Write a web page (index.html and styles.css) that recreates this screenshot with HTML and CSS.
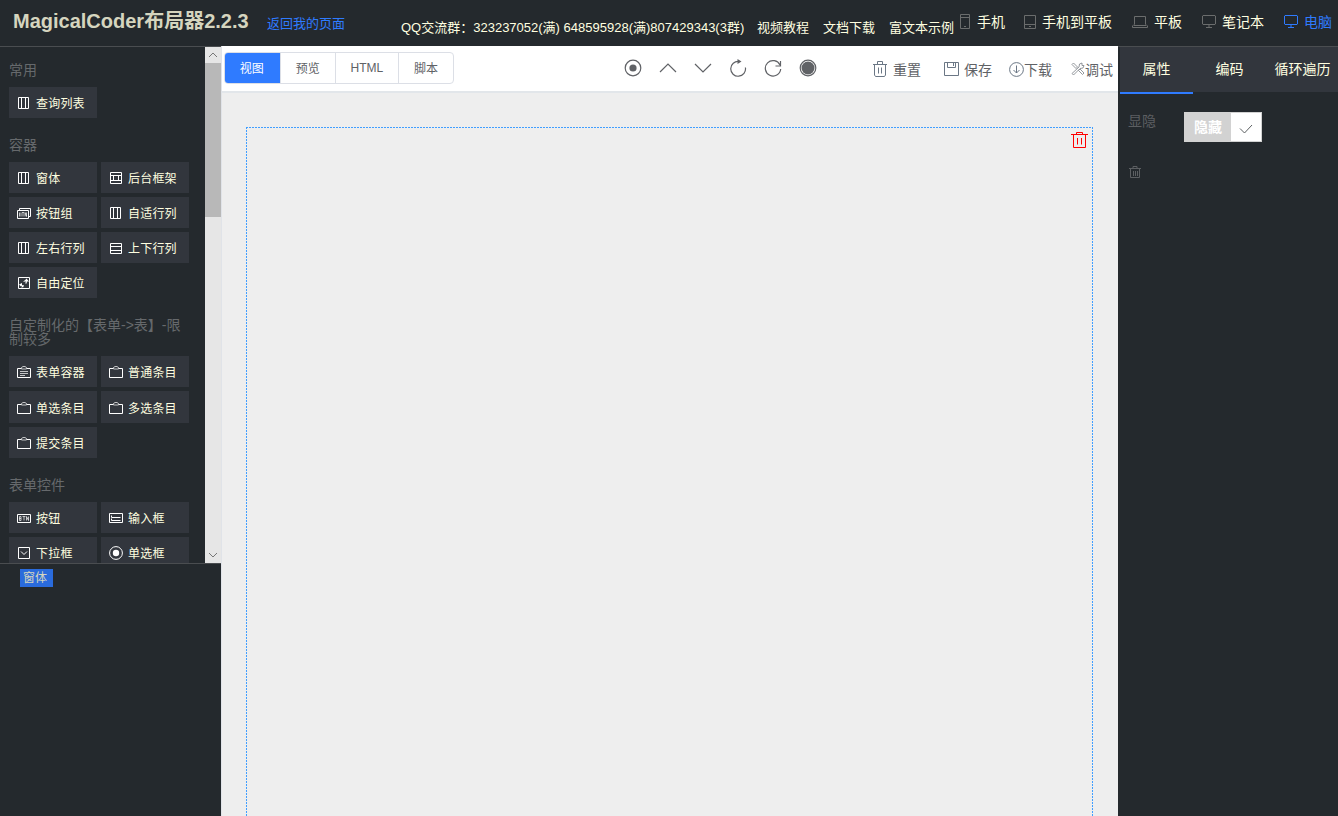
FILE: index.html
```html
<!DOCTYPE html>
<html lang="zh">
<head>
  <meta charset="UTF-8">
  <title>MagicalCoder布局器2.2.3</title>
  <link rel="stylesheet" href="styles.css">
</head>
<body>

  <!-- shared icons -->
  <svg class="sprite">
    <symbol id="i-cols" viewBox="0 0 14 14"><path d="M1.5 1.5h10v11h-10zM4.5 1.5v11M8.5 1.5v11"/></symbol>
    <symbol id="i-rows" viewBox="0 0 14 14"><path d="M1.5 2.5h11v10h-11zM1.5 5.5h11M1.5 9.5h11"/></symbol>
    <symbol id="i-frame" viewBox="0 0 14 14"><path d="M1.5 1.5h11v11h-11zM1.5 4.5h11M1.5 9.5h11M4.5 4.5v5M9.5 4.5v5"/></symbol>
    <symbol id="i-btn" viewBox="0 0 14 14"><path d="M.5 3.5h13v8h-13z"/><path class="thin" d="M2.5 5.5v4h1.5v-4zM2.5 7.5h1.5M5.5 5.5h3M7 5.5v4M9.5 9.5v-4l2 4v-4"/></symbol>
    <symbol id="i-btns" viewBox="0 0 14 14"><path d="M.5 4.5h11v8H.5zM2.5 4.5v-2h11v8h-2"/><path class="thin" d="M2.5 6.5v4M4 6.5v4M5 6.5h2M6 6.5v4M8 10.5v-4l1.5 4v-4"/></symbol>
    <symbol id="i-free" viewBox="0 0 14 14"><path d="M1.5 1.5h11v11h-11z"/><path class="soft" d="M6.500 5.500l3-1.500M8.500 7.500l1-3"/><path class="fill" d="M7 5.500l2.500-3L12 5.500zM2 8.500l3 3V7zM5 9l2 2-3 .5z"/><path class="soft" d="M9.500 5v2.500M4 9.500h3"/></symbol>
    <symbol id="i-clip" viewBox="0 0 14 14"><path d="M4 3.500H.5v9h13v-9H10"/><path class="soft" d="M4.500 4V2.500L6 1.500h2l1.500 1V4z"/></symbol>
    <symbol id="i-form" viewBox="0 0 14 14"><path d="M4 3.500H.5v9h13v-9H10"/><path class="soft" d="M4.500 4V2.500L6 1.500h2l1.500 1V4zM3 6.500h8M3 8.500h8M3 10.500h5"/></symbol>
    <symbol id="i-input" viewBox="0 0 14 14"><path d="M.5 2.500h13v9H.5zM2.500 4.500v2h9M2.500 7.500v2h9"/></symbol>
    <symbol id="i-select" viewBox="0 0 14 14"><path d="M1.5 1.5h11v11h-11zM4 5.500l3 3 3-3"/></symbol>
    <symbol id="i-radio" viewBox="0 0 14 14"><circle cx="7" cy="7" r="6.4"/><circle class="fill" cx="7" cy="7" r="3.2"/></symbol>
    <symbol id="i-trash" viewBox="0 0 17 18"><path d="M0 3.500h17M5.500 3V1.500h6V3M2.500 3.500v13h12v-13M6.500 7v6.500M10.500 7v6.500"/></symbol>
    <symbol id="i-check" viewBox="0 0 14 12"><path d="M1 5.500l4.500 4.500L13 2"/></symbol>
  </svg>

  <header class="header">
    <h1 class="title">MagicalCoder布局器2.2.3</h1>
    <a class="back" href="#">返回我的页面</a>
    <div class="links">
      <span class="qq">QQ交流群：323237052(满) 648595928(满)807429343(3群)</span>
      <a href="#">视频教程</a>
      <a href="#">文档下载</a>
      <a href="#">富文本示例</a>
    </div>
    <nav class="devices">
      <a href="#" class="phone"><svg width="10" height="15"><path d="M.5 .5h9v14h-9zM.5 3.5h9M4 12.5h2"/></svg>手机</a>
      <a href="#" class="phone-pad"><svg width="12" height="14"><path d="M.5 .5h11v13H.5zM.5 9.5h11M5 11.5h2"/></svg>手机到平板</a>
      <a href="#" class="pad"><svg width="16" height="12"><path d="M2.500 8.500V.5h11v8M2 8.500L.5 10v1.500h15V10L14 8.500M2 9.500h12"/></svg>平板</a>
      <a href="#" class="laptop"><svg width="14" height="13"><path d="M1 .5h12l.5.500v8l-.5.500H1L.5 9V1zM7 9.500V12M4 12.500h6"/></svg>笔记本</a>
      <a href="#" class="pc active"><svg width="14" height="13"><path d="M1 .5h12l.5.500v8l-.5.500H1L.5 9V1zM7 9.500V12M4 12.500h6"/></svg>电脑</a>
    </nav>
  </header>

  <div class="main">
    <aside class="left">
      <div class="palette">
        <div class="groups">
          <section>
            <h2>常用</h2>
            <ul>
              <li><svg><use href="#i-cols"/></svg>查询列表</li>
            </ul>
          </section>
          <section>
            <h2>容器</h2>
            <ul>
              <li><svg><use href="#i-cols"/></svg>窗体</li>
              <li><svg><use href="#i-frame"/></svg>后台框架</li>
              <li><svg><use href="#i-btns"/></svg>按钮组</li>
              <li><svg><use href="#i-cols"/></svg>自适行列</li>
              <li><svg><use href="#i-cols"/></svg>左右行列</li>
              <li><svg><use href="#i-rows"/></svg>上下行列</li>
              <li><svg><use href="#i-free"/></svg>自由定位</li>
            </ul>
          </section>
          <section>
            <h2>自定制化的【表单-&gt;表】-限制较多</h2>
            <ul>
              <li><svg><use href="#i-form"/></svg>表单容器</li>
              <li><svg><use href="#i-clip"/></svg>普通条目</li>
              <li><svg><use href="#i-clip"/></svg>单选条目</li>
              <li><svg><use href="#i-clip"/></svg>多选条目</li>
              <li><svg><use href="#i-clip"/></svg>提交条目</li>
            </ul>
          </section>
          <section>
            <h2>表单控件</h2>
            <ul>
              <li><svg><use href="#i-btn"/></svg>按钮</li>
              <li><svg><use href="#i-input"/></svg>输入框</li>
              <li><svg><use href="#i-select"/></svg>下拉框</li>
              <li><svg><use href="#i-radio"/></svg>单选框</li>
            </ul>
          </section>
        </div>
        <div class="scrollbar">
          <svg width="16" height="16"><path d="M4 10l4-4 4 4"/></svg>
          <div class="thumb"></div>
          <svg width="16" height="16"><path d="M4 6l4 4 4-4"/></svg>
        </div>
      </div>
      <div class="tree"><span>窗体</span></div>
    </aside>

    <main class="center">
      <div class="toolbar">
        <div class="tabs">
          <button class="active">视图</button>
          <button>预览</button>
          <button>HTML</button>
          <button>脚本</button>
        </div>
        <div class="tools">
          <svg viewBox="0 0 18 18"><circle cx="9" cy="9" r="7.8"/><circle class="fill" cx="9" cy="9" r="3.6"/></svg>
          <svg viewBox="0 0 18 18"><path d="M1 13l8-8 8 8"/></svg>
          <svg viewBox="0 0 18 18"><path d="M1 5l8 8 8-8"/></svg>
          <svg viewBox="0 0 18 18"><path d="M10 2.500A7.400 7.400 0 1 0 16.400 8.500"/><path class="fill" d="M8.500 0l4 2.500-4 2.500z"/></svg>
          <svg viewBox="0 0 18 18"><path d="M16 6A7.700 7.700 0 1 0 16.700 10M16.500 2v5h-5"/></svg>
          <svg viewBox="0 0 18 18"><circle cx="9" cy="9" r="7.800"/><circle class="fill" cx="9" cy="9" r="6.500"/></svg>
        </div>
        <div class="actions">
          <a href="#" class="reset"><svg width="14" height="16"><path d="M0 3.500h14M4.500 3V.5h5V3M1.500 4v10l1 1.500h9l1-1.500V4M5.500 6.500v6M8.500 6.500v6"/></svg>重置</a>
          <a href="#" class="save"><svg width="15" height="14"><path d="M.5 .5h14v13H.5zM3.500 .5v5h8v-5M9.500 1v3"/></svg>保存</a>
          <a href="#" class="download"><svg width="15" height="15"><circle cx="7.5" cy="7.5" r="6.9"/><path d="M7.500 3.500v7.500M4.500 8l3 3 3-3"/></svg>下载</a>
          <a href="#" class="debug"><svg width="14" height="14"><path d="M1 2.500L2.500 1l4 4L5 6.500zM7.500 8.500L9 7l4 4-1.500 1.500zM1 11.500L8 5l.5-3L11 1v2.500h2L12 6 9 6.500 2.500 13z"/></svg>调试</a>
        </div>
      </div>
      <div class="stage">
        <div class="canvas">
          <svg class="remove" width="17" height="18"><use href="#i-trash"/></svg>
        </div>
      </div>
    </main>

    <aside class="right">
      <div class="prop-tabs">
        <a href="#" class="active">属性</a>
        <a href="#">编码</a>
        <a href="#">循环遍历</a>
      </div>
      <div class="props">
        <div class="prop">
          <label>显隐</label>
          <div class="switch"><b>隐藏</b><i><svg width="14" height="12"><use href="#i-check"/></svg></i></div>
        </div>
        <svg class="clear" width="12" height="12"><path d="M0 2.500h12M4 2V.5h4V2M1.500 3v8.500h9V3M4.500 5v5M6.500 5v5M8.500 5v5"/></svg>
      </div>
    </aside>
  </div>

</body>
</html>
```

FILE: styles.css
```css
* {
  box-sizing: border-box;
}

body {
  margin: 0;
  height: 100vh;
  overflow: hidden;
  display: flex;
  flex-direction: column;
  background: #24292d;
  color: #ffffe0;
  font: 14px "Liberation Sans", "Noto Sans CJK SC", sans-serif;
}

a {
  color: inherit;
  text-decoration: none;
}

svg {
  flex: none;
  fill: none;
  stroke: currentColor;
}

.sprite {
  display: none;
}

.fill {
  fill: currentColor;
  stroke: none;
}

.thin {
  stroke-width: 0.7;
}

.soft {
  opacity: 0.7;
}

/* header */
.header {
  flex: none;
  display: flex;
  height: 46px;
  padding-left: 13px;
  white-space: nowrap;
}

.title {
  width: 254px;
  margin: 0;
  color: #d5d5bf;
  font-size: 20px;
  line-height: 42px;
}

.back {
  width: 134px;
  color: #2f7bff;
  font-size: 13px;
  line-height: 48px;
}

.links {
  display: flex;
  gap: 14px;
  width: 559px;
  font-size: 13px;
  line-height: 56px;
}

.qq {
  width: 342px;
}

.devices {
  display: flex;
  height: 42px;
}

.devices a {
  display: flex;
  align-items: center;
  height: 41px;
}

.devices svg {
  margin-top: 2px;
  color: #6b6d6d;
}

.devices .active,
.devices .active svg {
  color: #2f7bff;
}

.phone {
  gap: 7px;
  width: 64px;
}

.phone-pad {
  gap: 6px;
  width: 108px;
}

.pad {
  gap: 6px;
  width: 70px;
}

.laptop {
  gap: 6px;
  width: 82px;
}

.pc {
  gap: 6px;
}

.main {
  flex: 1;
  display: flex;
  min-height: 0;
}

/* left palette */
.left {
  display: flex;
  flex-direction: column;
  width: 221px;
  border-top: 1px solid #4a4d50;
}

.palette {
  flex: none;
  display: flex;
  height: 516px;
  overflow: hidden;
}

.groups {
  width: 205px;
  padding: 15.9px 12px 0 9px;
}

.groups section {
  margin-bottom: 16px;
}

.groups h2 {
  width: 180px;
  margin: 0 0 10px;
  color: #66696c;
  font-size: 14px;
  font-weight: normal;
  line-height: 14px;
}

.groups ul {
  display: flex;
  flex-wrap: wrap;
  column-gap: 4px;
  margin: 0;
  padding: 0;
  list-style: none;
}

.groups li {
  display: flex;
  align-items: center;
  gap: 5px;
  width: 88px;
  height: 31.1px;
  margin-bottom: 4px;
  padding-left: 8px;
  background: #32363d;
  font-size: 12px;
  letter-spacing: 0.2px;
}

.groups li svg {
  width: 14px;
  height: 14px;
  margin-top: 1px;
  color: #fff;
}

.scrollbar {
  display: flex;
  flex-direction: column;
  width: 16px;
  background: #e6e6e6;
  color: #777;
}

.thumb {
  height: 154px;
  margin-bottom: auto;
  background: #b8b8b8;
}

.tree {
  flex: 1;
  padding: 5px 20px;
  border-top: 1px solid #4a4d50;
}

.tree span {
  display: block;
  width: 33px;
  height: 18px;
  padding-left: 3px;
  background: #2a6bdc;
  color: #d5d5bf;
  font-size: 12px;
  line-height: 18px;
}

/* center */
.center {
  flex: none;
  display: flex;
  flex-direction: column;
  width: 897px;
  border-left: 1px solid #e0e3e8;
  background: #eee;
  color: #606266;
}

.toolbar {
  flex: none;
  display: flex;
  height: 47px;
  padding-left: 2px;
  border-bottom: 2px solid #e2e6ea;
  background: #fff;
}

.tabs {
  display: flex;
  width: 230px;
  height: 32px;
  margin-top: 6px;
  border: 1px solid #dcdfe6;
  border-radius: 4px;
  overflow: hidden;
}

.tabs button {
  flex: 1 1 55px;
  padding: 0 0 1px;
  border: 0;
  border-left: 1px solid #dcdfe6;
  background: none;
  color: inherit;
  font: 12px "Liberation Sans", "Noto Sans CJK SC", sans-serif;
}

.tabs button:nth-child(3) {
  flex-basis: 64px;
}

.tabs .active {
  flex-basis: 56px;
  margin: -1px 0 -1px -1px;
  border: 0;
  background: #2f7bff;
  color: #fff;
}

.tools {
  display: flex;
  align-items: center;
  gap: 17px;
  width: 249px;
  margin-left: 170px;
  padding-bottom: 1px;
}

.tools svg {
  width: 18px;
  height: 18px;
  stroke-width: 1.2;
}

.actions {
  display: flex;
  white-space: nowrap;
}

.actions a {
  display: flex;
  align-items: center;
}

.actions svg {
  margin-top: 1px;
  color: #6b7785;
}

.reset {
  gap: 6px;
  width: 71px;
}

.save {
  gap: 5px;
  width: 65px;
}

.download {
  width: 62px;
}

.debug svg {
  color: #7a7f85;
  stroke-width: 0.8;
}

.stage {
  flex: 1;
  padding: 34px 24px 0;
}

/* fine dashed frame, open at the bottom */
.canvas {
  display: flex;
  justify-content: flex-end;
  width: 847px;
  height: 100%;
  padding: 4px 5px;
  background:
    repeating-linear-gradient(90deg, #409eff 0 2px, transparent 2px 3px) top / 100% 1px no-repeat,
    repeating-linear-gradient(#409eff 0 2px, transparent 2px 3px) left / 1px 100% no-repeat,
    repeating-linear-gradient(#409eff 0 2px, transparent 2px 3px) right / 1px 100% no-repeat;
}

.remove {
  color: #f00;
}

/* right panel */
.right {
  flex: 1;
  padding-left: 2px;
  border-top: 1px solid #4a4d50;
}

.prop-tabs {
  display: flex;
  height: 45px;
  background: #32363d;
}

.prop-tabs a {
  flex: none;
  width: 73px;
  height: 47px;
  line-height: 45px;
  text-align: center;
}

.prop-tabs .active {
  border-bottom: 2px solid #2f7bff;
}

.props {
  padding: 20px 8px;
  color: #5c5f62;
}

.prop {
  display: flex;
  height: 54px;
}

.prop label {
  width: 56px;
  line-height: 18px;
}

.switch {
  display: flex;
  width: 78px;
  height: 30px;
  border: 1px solid #d2d2d2;
  background: #d2d2d2;
}

.switch b {
  width: 46px;
  color: #fff;
  line-height: 28px;
  text-align: center;
}

.switch i {
  flex: 1;
  display: flex;
  align-items: center;
  justify-content: center;
  padding-top: 3px;
  background: #fff;
}

.clear {
  display: block;
  margin-left: 1px;
}
```
